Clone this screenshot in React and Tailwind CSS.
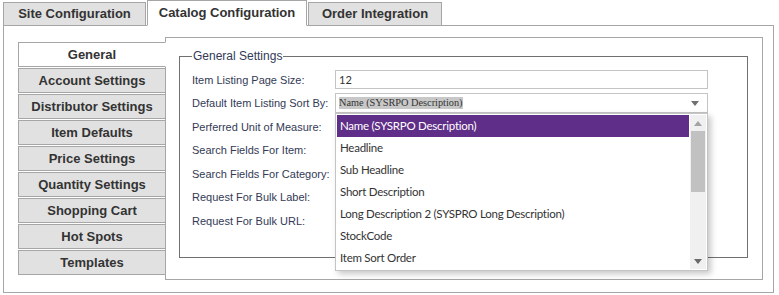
import React from 'react';

const navItems = [
    'General',
    'Account Settings',
    'Distributor Settings',
    'Item Defaults',
    'Price Settings',
    'Quantity Settings',
    'Shopping Cart',
    'Hot Spots',
    'Templates',
];

const labels = [
    'Item Listing Page Size:',
    'Default Item Listing Sort By:',
    'Perferred Unit of Measure:',
    'Search Fields For Item:',
    'Search Fields For Category:',
    'Request For Bulk Label:',
    'Request For Bulk URL:',
];

const sortOptions = [
    'Name (SYSRPO Description)',
    'Headline',
    'Sub Headline',
    'Short Description',
    'Long Description 2 (SYSPRO Long Description)',
    'StockCode',
    'Item Sort Order',
];

const Triangle = ({ up, className }) => (
    <svg width="8" height="5" viewBox="0 0 8 5" className={className}>
        {up ? <path d="M0 5 L4 0 L8 5 Z" fill="currentColor" /> : <path d="M0 0 L8 0 L4 5 Z" fill="currentColor" />}
    </svg>
);

const App = () => {
    return (
        <div className="w-[779px] h-[295px] bg-white overflow-hidden font-['Liberation_Sans',Arial,sans-serif]">
            {/* Top tabs */}
            <div className="flex items-end gap-px h-[26px] pl-[3px]">
                <div className="w-[143px] h-[24px] border border-[#a6a6a6] bg-[#e1e1e1] text-[#333] font-bold text-[13px] leading-[22px] text-center">
                    Site Configuration
                </div>
                <div className="relative z-10 w-[160px] h-[26px] border border-[#a6a6a6] border-b-white bg-white text-[#333] font-bold text-[13px] leading-[24px] text-center">
                    Catalog Configuration
                </div>
                <div className="w-[134px] h-[24px] border border-[#a6a6a6] bg-[#e1e1e1] text-[#333] font-bold text-[13px] leading-[22px] text-center">
                    Order Integration
                </div>
            </div>

            {/* Outer panel */}
            <div className="-mt-px ml-[3px] w-[771px] h-[268px] border border-[#a6a6a6] pl-[14px] pr-[10px] pt-[11px]">
                <div className="flex items-start">
                    {/* Side nav */}
                    <div className="mt-[5px] w-[148px] flex flex-col gap-px shrink-0 -mr-px">
                        {navItems.map((item, i) => (
                            <div
                                key={item}
                                className={
                                    i === 0
                                        ? 'relative z-10 h-[25px] border border-[#a6a6a6] border-r-white bg-white text-[#333] font-bold text-[13px] leading-[23px] text-center'
                                        : 'h-[25px] border border-[#a6a6a6] bg-[#e1e1e1] text-[#333] font-bold text-[13px] leading-[23px] text-center'
                                }
                            >
                                {item}
                            </div>
                        ))}
                    </div>

                    {/* Inner panel */}
                    <div className="w-[598px] h-[243px] border border-[#a6a6a6] pl-[13px] pt-[11px]">
                        <fieldset className="w-[569px] h-[209px] border border-[#707070] px-[12px]">
                            <legend className="px-[1px] text-[12px] leading-[15px] text-[#333a56]">General Settings</legend>
                            <div className="flex flex-col pt-[4px]">
                                {labels.map((label, i) => (
                                    <div key={label} className="flex items-center h-[23.5px]">
                                        <div className="w-[143px] shrink-0 text-[11px] text-[#333a56] whitespace-nowrap">{label}</div>
                                        {i === 0 && (
                                            <div className="w-[373px] h-[19px] border border-[#c4c4c4] bg-white pl-[3px] text-[11px] leading-[17px] text-[#333] font-['Lato',sans-serif]">
                                                12
                                            </div>
                                        )}
                                        {i === 1 && (
                                            <div className="relative w-[373px] h-[20px] border border-[#c4c4c4] bg-white">
                                                <div className="flex items-center h-full pl-[3px] pr-[8px] justify-between">
                                                    <span className="bg-[#c8c8c8] text-[10.3px] leading-[12px] text-[#333] font-['Liberation_Serif',serif]">
                                                        Name (SYSRPO Description)
                                                    </span>
                                                    <Triangle className="text-[#707070]" />
                                                </div>
                                                {/* Open dropdown list */}
                                                <div className="absolute z-20 -left-px top-[19px] w-[373px] border border-[#c4c4c4] bg-white shadow-[3px_3px_6px_rgba(0,0,0,0.22)] flex p-px">
                                                    <div className="w-[355px] flex flex-col">
                                                        {sortOptions.map((opt, j) => (
                                                            <div
                                                                key={opt}
                                                                className={
                                                                    j === 0
                                                                        ? 'h-[22px] pl-[3px] bg-[#5f2e88] text-white text-[11.5px] tracking-[-0.25px] leading-[22px] whitespace-nowrap font-["Lato",sans-serif]'
                                                                        : 'h-[22px] pl-[3px] text-[#333] text-[11.5px] tracking-[-0.25px] leading-[22px] whitespace-nowrap font-["Lato",sans-serif]'
                                                                }
                                                            >
                                                                {opt}
                                                            </div>
                                                        ))}
                                                    </div>
                                                    <div className="ml-px w-[16px] bg-[#f0f0f0] flex flex-col items-center">
                                                        <div className="h-[16px] flex items-center justify-center text-[#a3a3a3]">
                                                            <Triangle up />
                                                        </div>
                                                        <div className="w-[14px] h-[61px] bg-[#c1c1c1]" />
                                                        <div className="flex-1" />
                                                        <div className="h-[16px] flex items-center justify-center text-[#6a6a6a]">
                                                            <Triangle />
                                                        </div>
                                                    </div>
                                                </div>
                                            </div>
                                        )}
                                    </div>
                                ))}
                            </div>
                        </fieldset>
                    </div>
                </div>
            </div>
        </div>
    );
};

export default App;
